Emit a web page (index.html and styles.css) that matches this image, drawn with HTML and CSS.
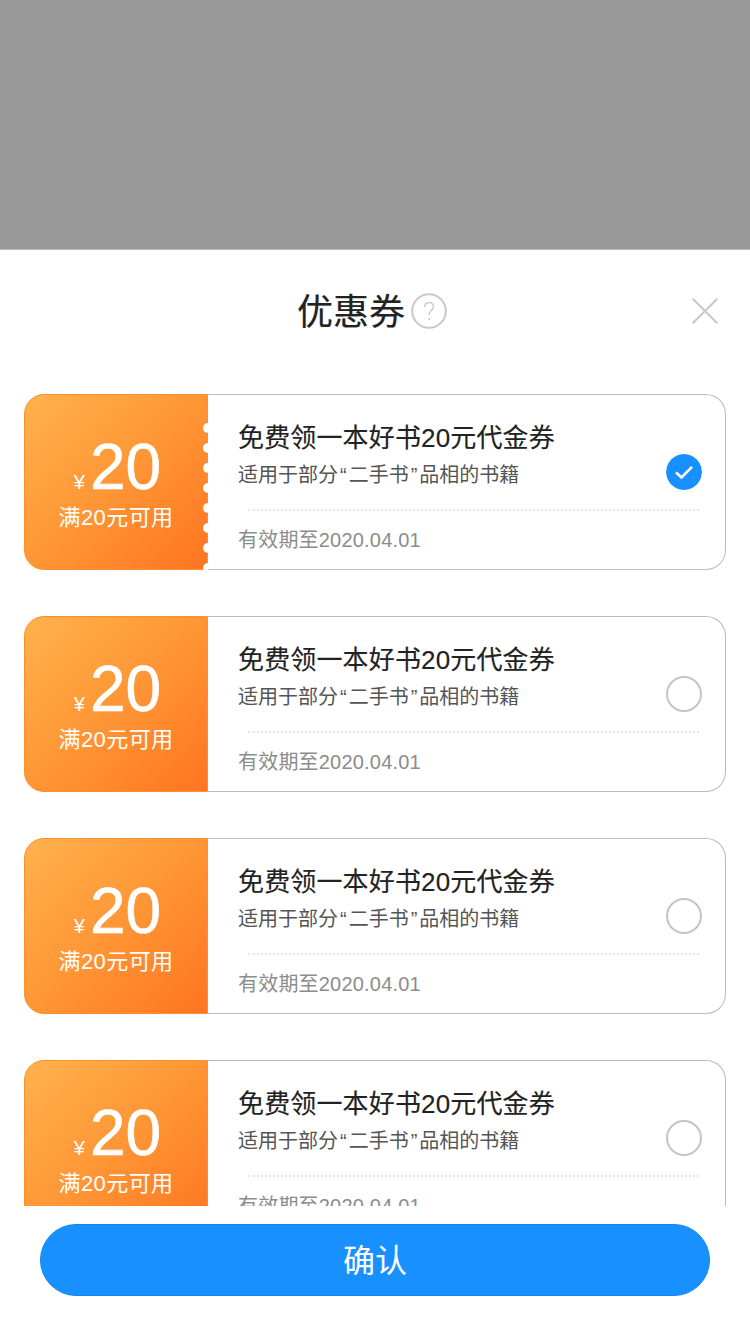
FILE: index.html
```html
<!DOCTYPE html>
<html lang="zh">
<head>
<meta charset="utf-8">
<title>优惠券</title>
<link rel="stylesheet" href="styles.css">
</head>
<body>
<div class="backdrop"></div>
<section class="sheet">
  <header class="head">
    <h1 class="title">优惠券</h1>
    <svg class="help" viewBox="0 0 36 36" width="36" height="36"><circle cx="18" cy="18" r="16.800" fill="none" stroke="#c8c8c8" stroke-width="2"/><path d="M13.600 14.200c0-2.800 1.900-4.600 4.500-4.600 2.500 0 4.300 1.600 4.300 3.900 0 1.800-.9 2.800-2.100 3.900-1.200 1.100-2 1.900-2 3.600v1" fill="none" stroke="#c8c8c8" stroke-width="1.400"/><circle cx="18.300" cy="26" r="1.100" fill="#c8c8c8"/></svg>
    <svg class="close" viewBox="0 0 26 26" width="26" height="26"><path d="M.7.7 25.300 25.300M25.300.7 .7 25.300" fill="none" stroke="#c8c8c8" stroke-width="2"/></svg>
  </header>
  <div class="list">
    <article class="card">
      <div class="value">
        <div class="amount"><span class="yen">¥</span><span class="num">20</span></div>
        <div class="cond">满20元可用</div>
        <div class="teeth"><i></i><i></i><i></i><i></i><i></i><i></i><i></i><i></i></div>
      </div>
      <div class="info">
        <div class="name">免费领一本好书20元代金券</div>
        <div class="desc">适用于部分<span class="q">“</span>二手书<span class="q">”</span>品相的书籍</div>
        <div class="rule"></div>
        <div class="date">有效期至2020.04.01</div>
        <svg class="radio" viewBox="0 0 36 36" width="36" height="36"><circle cx="18" cy="18" r="18" fill="#1890ff"/><path d="M10 18.500 15.500 23.500 26 12.800" fill="none" stroke="#fff" stroke-width="2.600"/></svg>
      </div>
    </article>
    <article class="card">
      <div class="value">
        <div class="amount"><span class="yen">¥</span><span class="num">20</span></div>
        <div class="cond">满20元可用</div>
      </div>
      <div class="info">
        <div class="name">免费领一本好书20元代金券</div>
        <div class="desc">适用于部分<span class="q">“</span>二手书<span class="q">”</span>品相的书籍</div>
        <div class="rule"></div>
        <div class="date">有效期至2020.04.01</div>
        <span class="radio off"></span>
      </div>
    </article>
    <article class="card">
      <div class="value">
        <div class="amount"><span class="yen">¥</span><span class="num">20</span></div>
        <div class="cond">满20元可用</div>
      </div>
      <div class="info">
        <div class="name">免费领一本好书20元代金券</div>
        <div class="desc">适用于部分<span class="q">“</span>二手书<span class="q">”</span>品相的书籍</div>
        <div class="rule"></div>
        <div class="date">有效期至2020.04.01</div>
        <span class="radio off"></span>
      </div>
    </article>
    <article class="card">
      <div class="value">
        <div class="amount"><span class="yen">¥</span><span class="num">20</span></div>
        <div class="cond">满20元可用</div>
      </div>
      <div class="info">
        <div class="name">免费领一本好书20元代金券</div>
        <div class="desc">适用于部分<span class="q">“</span>二手书<span class="q">”</span>品相的书籍</div>
        <div class="rule"></div>
        <div class="date">有效期至2020.04.01</div>
        <span class="radio off"></span>
      </div>
    </article>
  </div>
  <footer class="foot"><button class="confirm">确认</button></footer>
</section>
</body>
</html>
```
FILE: styles.css
```css
* { box-sizing: border-box; }
html, body { margin: 0; padding: 0; }
body {
  width: 750px;
  height: 1334px;
  overflow: hidden;
  display: flex;
  flex-direction: column;
  background: #fff;
  font-family: "Liberation Sans", "Noto Sans CJK SC", sans-serif;
}
.backdrop { height: 250px; flex: none; background: #999; border-bottom: 1px solid #bdbdbd; }
.sheet { flex: 1; display: flex; flex-direction: column; min-height: 0; background: #fff; }
.head {
  position: relative;
  height: 144px;
  flex: none;
  display: flex;
  justify-content: center;
  align-items: flex-start;
  gap: 6px;
  padding: 43px 8px 0 0;
}
.title { margin: 0; font-size: 36px; line-height: 39px; font-weight: 400; color: #222; -webkit-text-stroke: .2px #222; }
.help { display: block; flex: none; margin-right: -2px; }
.close { position: absolute; left: 692px; top: 48px; }
.list { height: 812px; flex: none; overflow: hidden; padding: 0 24px; display: flex; flex-direction: column; gap: 46px; }
.card { height: 176px; flex: none; display: flex; }
.value {
  position: relative;
  width: 184px;
  flex: none;
  border-radius: 20px 0 0 20px;
  background: linear-gradient(135deg, #ffb24d 0%, #ff9635 50%, #ff7422 100%);
  border: 1px solid #ff9029;
  color: #fff;
  text-align: center;
  padding-top: 36px;
}
.amount { display: flex; justify-content: center; align-items: baseline; gap: 5px; padding-left: 3px; height: 64px; line-height: 72px; }
.yen { font-size: 20px; }
.num { font-size: 64px; -webkit-text-stroke: .6px #fff; }
.cond { margin-top: 9px; font-size: 22px; line-height: 28px; letter-spacing: .4px; }
.teeth { position: absolute; right: -1px; top: 28px; width: 5px; height: 160px; display: flex; flex-direction: column; gap: 10px; overflow: hidden; }
.teeth i { display: block; width: 10px; height: 10px; flex: none; border-radius: 50%; background: #fff; }
.info {
  position: relative;
  flex: 1;
  border: 1px solid #bbb;
  border-left: 0;
  border-radius: 0 20px 20px 0;
  padding: 26px 0 0 30px;
}
.name { font-size: 26px; line-height: 34px; color: #222; letter-spacing: .15px; -webkit-text-stroke: .15px #222; }
.desc { font-size: 20px; line-height: 28px; margin-top: 6px; color: #555; }
.q { padding: 0 2px; }
.rule { margin: 20px 26px 0 10px; height: 0; border-top: 2px dotted #e6e6e6; }
.date { font-size: 20px; line-height: 28px; margin-top: 15px; color: #8c8c8c; letter-spacing: .2px; }
.radio { position: absolute; left: 458px; top: 59px; display: block; width: 36px; height: 36px; border-radius: 50%; }
.radio.off { border: 2px solid #c4c4c4; }
.foot { flex: 1; padding: 18px 40px 0; background: #fff; }
.confirm {
  display: block;
  width: 100%;
  height: 72px;
  border: 1px solid #0f86f5;
  border-radius: 36px;
  background: #1890ff;
  color: #fff;
  font: 400 32px/70px "Liberation Sans", "Noto Sans CJK SC", sans-serif;
  padding: 1px 0 0;
}
```
